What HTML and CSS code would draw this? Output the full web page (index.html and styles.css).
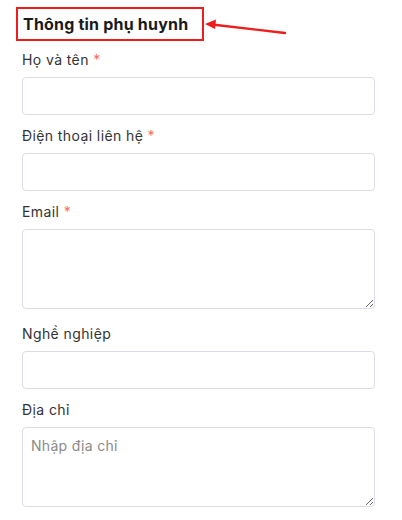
FILE: index.html
```html
<!DOCTYPE html>
<html lang="vi">
<head>
<meta charset="utf-8">
<link rel="stylesheet" href="styles.css">
</head>
<body>
<div class="page">
  <div class="heading-row">
    <h2 class="heading">Thông tin phụ huynh</h2>
    <svg class="arrow" width="90" height="22" viewBox="0 0 90 22">
      <line x1="8" y1="8.5" x2="81" y2="17" stroke="#ee1c1c" stroke-width="2.4" stroke-linecap="round"/>
      <polygon points="1,8 12,3.5 11,13" fill="#ee1c1c"/>
    </svg>
  </div>
  <form class="form">
    <div class="field">
      <label class="label">Họ và tên <span class="req">*</span></label>
      <input class="input" type="text">
    </div>
    <div class="field">
      <label class="label">Điện thoại liên hệ <span class="req">*</span></label>
      <input class="input" type="text">
    </div>
    <div class="field">
      <label class="label">Email <span class="req">*</span></label>
      <textarea class="textarea"></textarea>
    </div>
    <div class="field">
      <label class="label">Nghề nghiệp</label>
      <input class="input" type="text">
    </div>
    <div class="field">
      <label class="label">Địa chỉ</label>
      <textarea class="textarea" placeholder="Nhập địa chỉ"></textarea>
    </div>
  </form>
</div>
</body>
</html>
```

FILE: styles.css
```css
* { box-sizing: border-box; }
html, body { margin: 0; padding: 0; background: #fff; }
body {
  font-family: "Inter", "Noto Sans", sans-serif;
  color: #2b2b2b;
}
.page {
  padding: 7px 27px 0 22px;
  width: 402px;
}
.heading-row {
  position: relative;
  margin-left: -6px;
  height: 34px;
}
.heading {
  display: inline-block;
  margin: 0;
  height: 34px;
  padding: 0 14px 0 5px;
  border: 2px solid #ee1c1c;
  font-size: 16px;
  font-weight: 700;
  line-height: 30px;
  letter-spacing: 0.2px;
  color: #1a1a1a;
}
.arrow {
  position: absolute;
  left: 188px;
  top: 9px;
}
.form {
  display: flex;
  flex-direction: column;
  gap: 11px;
  margin-top: 9px;
}
.field {
  display: flex;
  flex-direction: column;
  gap: 7px;
}
.label {
  font-size: 14px;
  line-height: 20px;
  letter-spacing: 0.4px;
  color: #333;
}
.req { color: #f56c6c; }
.input, .textarea {
  display: block;
  width: 353px;
  border: 1px solid #dcdce4;
  border-radius: 4px;
  background: #fff;
  font-family: inherit;
  font-size: 14px;
  letter-spacing: 0.3px;
  color: #333;
  outline: none;
}
.input { height: 38px; padding: 0 9px; }
.textarea {
  height: 80px;
  padding: 8px 8px;
  line-height: 20px;
  margin-bottom: 4px;
  resize: vertical;
}
.textarea::placeholder { color: #8a8a8a; }
```
